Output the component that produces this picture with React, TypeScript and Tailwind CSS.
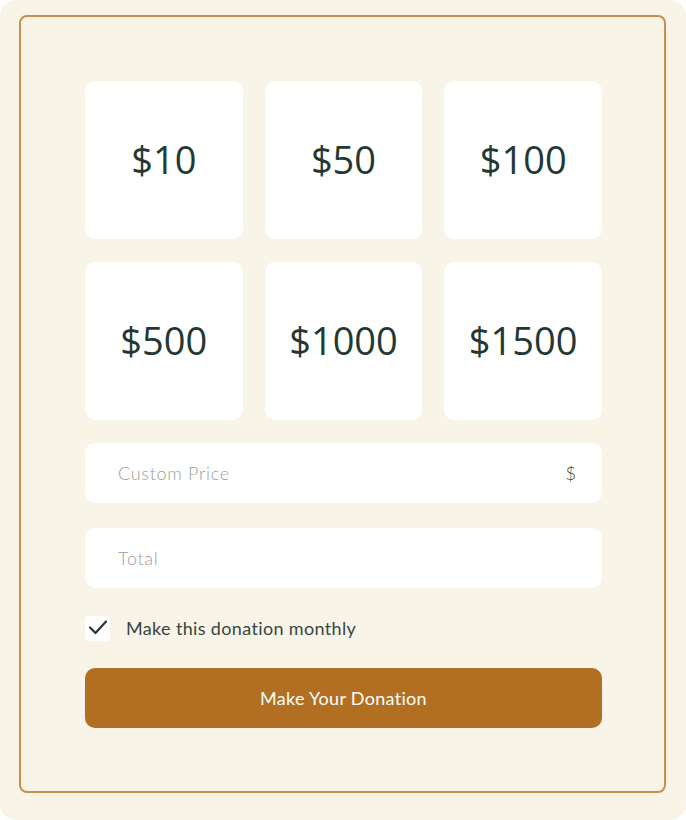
import React from "react";

const amounts = ["$10", "$50", "$100", "$500", "$1000", "$1500"];

export default function App() {
  return (
    <div className="w-[686px] h-[820px] bg-white">
      <div className="w-[686px] h-[820px] rounded-[16px] bg-[#f8f4e8] pt-[15px] pl-[19px]">
        <div className="w-[647px] h-[778px] rounded-[8px] border-2 border-[#c8904e] pt-[64px] pl-[64px]">
          <div className="w-[517px]">
            <div className="grid grid-cols-3 gap-x-[22px] gap-y-[23px]">
              {amounts.map((a) => (
                <div
                  key={a}
                  className="h-[158px] rounded-[10px] bg-white flex items-center justify-center text-[38px] text-[#243833] pb-[1px]"
                  style={{ fontFamily: '"Open Sans", "Noto Sans", sans-serif' }}
                >
                  {a}
                </div>
              ))}
            </div>
            <div
              className="mt-[23px] h-[60px] rounded-[10px] bg-white flex items-center justify-between pl-[33px] pr-[26px] text-[18px]"
              style={{ fontFamily: 'Lato, "Open Sans", sans-serif' }}
            >
              <span className="text-[#9c9c9c] font-light tracking-[0.7px]">Custom Price</span>
              <span className="text-[#3a4542] font-light">$</span>
            </div>
            <div
              className="mt-[25px] h-[60px] rounded-[10px] bg-white flex items-center pl-[33px] text-[18px]"
              style={{ fontFamily: 'Lato, "Open Sans", sans-serif' }}
            >
              <span className="text-[#9c9c9c] font-light tracking-[0.7px]">Total</span>
            </div>
            <div className="mt-[28px] flex items-center h-[25px]">
              <div className="w-[25px] h-[25px] rounded-[4px] bg-white flex items-center justify-center">
                <svg width="20" height="16" viewBox="0 0 20 16" fill="none" className="-mt-[3px]">
                  <path d="M2 8.5 L7.5 14 L18 2.5" stroke="#243833" strokeWidth="2.2" strokeLinecap="round" strokeLinejoin="round" />
                </svg>
              </div>
              <span
                className="ml-[16px] text-[18px] text-[#3a4542] tracking-[0.35px]"
                style={{ fontFamily: 'Lato, "Open Sans", sans-serif' }}
              >
                Make this donation monthly
              </span>
            </div>
            <button
              className="mt-[27px] w-full h-[60px] rounded-[10px] bg-[#b26f22] text-white text-[18px] tracking-[0.3px] flex items-center justify-center"
              style={{ fontFamily: 'Lato, "Open Sans", sans-serif' }}
            >
              Make Your Donation
            </button>
          </div>
        </div>
      </div>
    </div>
  );
}
